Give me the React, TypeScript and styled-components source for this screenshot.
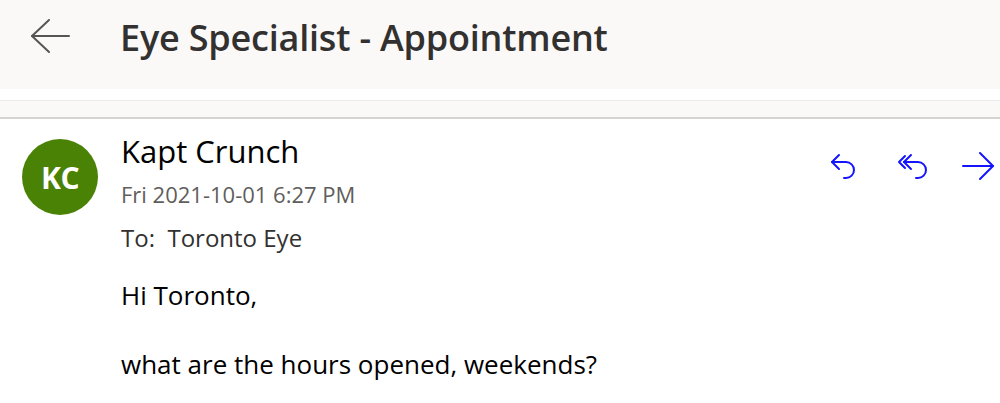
import styled, { createGlobalStyle } from "styled-components";

const GlobalStyle = createGlobalStyle`
  html, body {
    margin: 0;
    padding: 0;
    background: #ffffff;
    font-family: "Open Sans", "Noto Sans", sans-serif;
  }
`;

const BLUE = "#1414ff";

// Icons
function BackArrow() {
  return (
    <svg width="44" height="40" viewBox="0 0 44 40" fill="none" stroke="#555555" strokeWidth="2" strokeLinecap="round" strokeLinejoin="round">
      <path d="M4 18 H41" />
      <path d="M21 2 L4 18 L21 34" />
    </svg>
  );
}

function ReplyIcon() {
  return (
    <svg width="36" height="32" viewBox="0 0 36 32" fill="none" stroke={BLUE} strokeWidth="2" strokeLinecap="round" strokeLinejoin="round">
      <path d="M11 5 L4 12 L11 19" />
      <path d="M4 12 H18 A8 8 0 0 1 18 28 H16" />
    </svg>
  );
}

function ReplyAllIcon() {
  return (
    <svg width="36" height="32" viewBox="0 0 36 32" fill="none" stroke={BLUE} strokeWidth="2" strokeLinecap="round" strokeLinejoin="round">
      <path d="M11 6 L5 12 L11 18" />
      <path d="M17 5 L10 12 L17 19" />
      <path d="M10 12 H24 A8 8 0 0 1 24 28 H22" />
    </svg>
  );
}

function ForwardIcon() {
  return (
    <svg width="36" height="32" viewBox="0 0 36 32" fill="none" stroke={BLUE} strokeWidth="2" strokeLinecap="round" strokeLinejoin="round">
      <path d="M3 16 H33" />
      <path d="M20 3 L33 16 L20 29" />
    </svg>
  );
}

export default function App() {
  return (
    <>
      <GlobalStyle />
      <Page>
        {/* Header */}
        <Header>
          <BackButton aria-label="Back">
            <BackArrow />
          </BackButton>
          <Title>Eye Specialist - Appointment</Title>
        </Header>
        <Divider />
        {/* Message */}
        <Message>
          <Avatar>KC</Avatar>
          <Details>
            <TopRow>
              <Sender>Kapt Crunch</Sender>
              <Actions>
                <ActionButton aria-label="Reply">
                  <ReplyIcon />
                </ActionButton>
                <ActionButton aria-label="Reply all">
                  <ReplyAllIcon />
                </ActionButton>
                <ActionButton aria-label="Forward">
                  <ForwardIcon />
                </ActionButton>
              </Actions>
            </TopRow>
            <DateLine>Fri 2021-10-01 6:27 PM</DateLine>
            <Recipients>To:&nbsp; Toronto Eye</Recipients>
            <Body>
              <p>Hi Toronto,</p>
              <p>what are the hours opened, weekends?</p>
            </Body>
          </Details>
        </Message>
      </Page>
    </>
  );
}

const Page = styled.div`
  width: 1000px;
  height: 403px;
  overflow: hidden;
  background: #ffffff;
`;

const Header = styled.header`
  height: 89px;
  background: #faf9f8;
  display: flex;
  align-items: center;
`;

const BackButton = styled.button`
  border: 0;
  background: transparent;
  padding: 0;
  margin: 0 0 13px 28px;
  display: flex;
  cursor: pointer;
`;

const Title = styled.h1`
  margin: 0 0 13px 48px;
  font-size: 36px;
  line-height: 40px;
  font-weight: 600;
  color: #323130;
  letter-spacing: -0.2px;
`;

const Divider = styled.div`
  margin-top: 11px;
  height: 16px;
  background: #faf9f8;
  border-top: 1px solid #edebe9;
  border-bottom: 2px solid #d6d4d2;
`;

const Message = styled.section`
  display: flex;
  align-items: flex-start;
  padding: 12px 0 0 22px;
`;

const Avatar = styled.div`
  flex: none;
  margin-top: 8px;
  width: 76px;
  height: 76px;
  border-radius: 50%;
  background: #498205;
  color: #ffffff;
  font-size: 30px;
  font-weight: 700;
  display: flex;
  align-items: center;
  justify-content: center;
  letter-spacing: -0.5px;
`;

const Details = styled.div`
  flex: 1;
  margin-left: 23px;
`;

const TopRow = styled.div`
  display: flex;
  justify-content: space-between;
  align-items: flex-start;
`;

const Sender = styled.div`
  font-size: 31px;
  line-height: 40px;
  color: #000000;
`;

const Actions = styled.div`
  display: flex;
  gap: 30px;
  margin-top: 19px;
  margin-right: 4px;
`;

const ActionButton = styled.button`
  border: 0;
  background: transparent;
  padding: 0;
  display: flex;
  cursor: pointer;
`;

const DateLine = styled.div`
  font-size: 22px;
  line-height: 28px;
  color: #605e5c;
  margin-top: -2px;
`;

const Recipients = styled.div`
  font-size: 24px;
  line-height: 30px;
  color: #323130;
  margin-top: 15px;
`;

const Body = styled.div`
  margin-top: 25px;
  font-size: 26px;
  line-height: 34px;
  color: #000000;

  p {
    margin: 0 0 35px;
  }
`;
